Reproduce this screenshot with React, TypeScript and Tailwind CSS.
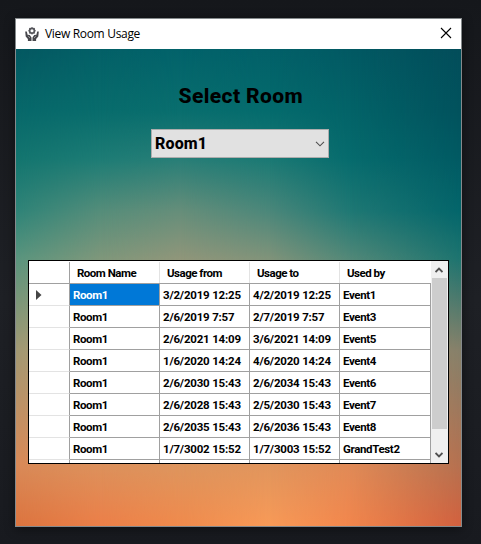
import React from "react";

const headers = ["Room Name", "Usage from", "Usage to", "Used by"];

const rows = [
  ["Room1", "3/2/2019 12:25", "4/2/2019 12:25", "Event1"],
  ["Room1", "2/6/2019 7:57", "2/7/2019 7:57", "Event3"],
  ["Room1", "2/6/2021 14:09", "3/6/2021 14:09", "Event5"],
  ["Room1", "1/6/2020 14:24", "4/6/2020 14:24", "Event4"],
  ["Room1", "2/6/2030 15:43", "2/6/2034 15:43", "Event6"],
  ["Room1", "2/6/2028 15:43", "2/5/2030 15:43", "Event7"],
  ["Room1", "2/6/2035 15:43", "2/6/2036 15:43", "Event8"],
  ["Room1", "1/7/3002 15:52", "1/7/3003 15:52", "GrandTest2"],
  ["", "", "", ""],
];

const columnTracking = ["tracking-[-0.4px]", "tracking-[-0.2px]", "tracking-[-0.2px]", "tracking-[-0.35px]"];

const gridCols = "grid grid-cols-[41px_90px_90px_90px_91px]";

/* Sunset backdrop: vertical colour ramps, each faded into the next from left to right. */
function Backdrop() {
  return (
    <div className="absolute inset-0 bg-[linear-gradient(#045861_0%,#07686a_13%,#13756f_23%,#2f8478_34%,#5a957e_44%,#a29a74_63%,#d98a58_87%,#dc743f_100%)]">
      <div className="absolute inset-0 bg-[linear-gradient(#036067_0%,#086c6c_13%,#1d7c75_23%,#558d7a_34%,#7f977b_44%,#b69a70_63%,#dc915c_87%,#ec7f48_100%)] [mask-image:linear-gradient(to_right,transparent_0%,black_19%)]" />
      <div className="absolute inset-0 bg-[linear-gradient(#02626a_0%,#096e6e_13%,#287e77_23%,#668e7a_34%,#90967a_44%,#bc986c_63%,#dd955e_87%,#f08a4c_100%)] [mask-image:linear-gradient(to_right,transparent_19%,black_37%)]" />
      <div className="absolute inset-0 bg-[linear-gradient(#026068_0%,#046b6d_13%,#1a7974_23%,#4b877a_34%,#80937a_44%,#bc986c_63%,#e0955d_87%,#f89a57_100%)] [mask-image:linear-gradient(to_right,transparent_37%,black_57%)]" />
      <div className="absolute inset-0 bg-[linear-gradient(#025963_0%,#036368_13%,#066b6d_23%,#1f7874_34%,#528878_44%,#a8906c_63%,#e08a57_87%,#f2864c_100%)] [mask-image:linear-gradient(to_right,transparent_57%,black_75%)]" />
      <div className="absolute inset-0 bg-[linear-gradient(#024d5a_0%,#01525d_13%,#015a63_23%,#03656a_34%,#1d746f_44%,#85806a_63%,#b47150_87%,#d2603e_100%)] [mask-image:linear-gradient(to_right,transparent_75%,black_100%)]" />
    </div>
  );
}

function AppIcon() {
  return (
    <svg width="14" height="15" viewBox="0 0 14 15" fill="none">
      <circle cx="7" cy="3.8" r="2.4" stroke="#55555a" strokeWidth="1.7" />
      <path d="M7 .2v1M7 6.2v1.2M3.3 3.8h1M9.7 3.8h1M4.4 1.2l.8.8M9.6 1.2l-.8.8M4.4 6.4l.8-.8M9.6 6.4l-.8-.8" stroke="#55555a" strokeWidth="1.1" />
      <path d="M.2 4.6 1.8 4.4 2.6 7.8 4.8 8 6.5 10.4V14H2.9V12L.7 9.4Z" fill="#46464b" />
      <path d="M13.8 4.6 12.2 4.4 11.4 7.8 9.2 8 7.5 10.4V14h3.6v-2l2.2-2.6Z" fill="#46464b" />
      <path d="m3.1 8.8 1.8 2.2M10.9 8.8l-1.8 2.2" stroke="#ccc" strokeWidth=".6" />
    </svg>
  );
}

function ScrollArrow({ down = false }: { down?: boolean }) {
  return (
    <svg width="8" height="6" viewBox="0 0 8 6" fill="none" className={down ? "rotate-180" : ""}>
      <path d="M.5 5 4 1.5 7.5 5" stroke="#505050" strokeWidth="1.9" />
    </svg>
  );
}

export default function App() {
  return (
    <div className="h-[544px] w-[481px] overflow-hidden bg-[#191b20] bg-[linear-gradient(#15171b,#1e2025_55%,#181a1f)] pt-[18px] pl-[15px] font-[Roboto,'Liberation_Sans',sans-serif] text-black">
      <div className="flex h-[509px] w-[447px] flex-col border border-[#858a8c] shadow-[0_2px_10px_rgba(0,0,0,0.45)]">
        <header className="flex h-[30px] shrink-0 items-center bg-white pr-[9px] pl-[9px]">
          <AppIcon />
          <span className="ml-[6px] font-['Open_Sans','Noto_Sans',sans-serif] text-[12px] leading-[16px] tracking-[-0.32px] whitespace-nowrap">
            View Room Usage
          </span>
          <svg className="relative -top-px ml-auto" width="12" height="12" viewBox="0 0 12 12" fill="none">
            <path d="m1 1 10 10M11 1 1 11" stroke="#000" strokeWidth="1.1" />
          </svg>
        </header>

        <main className="relative flex-1 overflow-hidden">
          <Backdrop />
          <div className="relative flex h-full flex-col items-start">
            <h1 className="mt-[33px] ml-[162.5px] h-[28px] text-[21px] leading-[28px] font-extrabold tracking-[0.4px] whitespace-nowrap">
              Select Room
            </h1>
            <div className="mt-[19px] ml-[135px] flex h-[29px] w-[178px] items-center border border-[#adadad] bg-[#e1e1e1] pr-[3px] pl-[3px]">
              <span className="text-[16px] leading-[20px] font-extrabold tracking-[0.15px]">Room1</span>
              <svg className="ml-auto" width="10" height="6" viewBox="0 0 10 6" fill="none">
                <path d="m1 .8 4 4 4-4" stroke="#505050" strokeWidth="1.1" />
              </svg>
            </div>

            <div className="mt-[102px] ml-[12px] flex h-[204px] w-[421px] overflow-hidden border border-black bg-white text-[11.5px] font-bold">
              <div className="w-[402px] shrink-0 pt-[1px]">
                <div className={gridCols + " h-[22px] border-b border-[#a0a0a0]"}>
                  <div className="border-r border-[#a0a0a0]" />
                  {headers.map((h) => (
                    <div key={h} className="flex items-center border-r border-[#e3e3e3] pl-[7px] leading-[16px] tracking-[-0.5px] whitespace-nowrap last:border-white">
                      {h}
                    </div>
                  ))}
                </div>
                {rows.map((row, i) => (
                  <div key={i} className={gridCols + " h-[22px]"}>
                    <div className="flex items-center border-r border-b border-r-[#a0a0a0] border-b-[#e3e3e3] pl-[7px]">
                      {i === 0 && (
                        <svg width="6" height="10" viewBox="0 0 6 10">
                          <path d="M0 0 5.5 5 0 10Z" fill="#454545" />
                        </svg>
                      )}
                    </div>
                    {row.map((cell, j) => (
                      <div
                        key={j}
                        className={
                          "flex items-center border-r border-b border-[#a0a0a0] pl-[3px] leading-[16px] whitespace-nowrap " +
                          columnTracking[j] +
                          (i === 0 && j === 0 ? " bg-[#0078d7] text-white" : "")
                        }
                      >
                        {cell}
                      </div>
                    ))}
                  </div>
                ))}
              </div>
              <div className="flex w-[17px] shrink-0 flex-col bg-[#f0f0f0] pr-px">
                <div className="flex h-[17px] items-center justify-center">
                  <ScrollArrow />
                </div>
                <div className="ml-px h-[151px] bg-[#cdcdcd]" />
                <div className="mt-[17px] flex h-[17px] items-center justify-center">
                  <ScrollArrow down />
                </div>
              </div>
            </div>
          </div>
        </main>
      </div>
    </div>
  );
}
